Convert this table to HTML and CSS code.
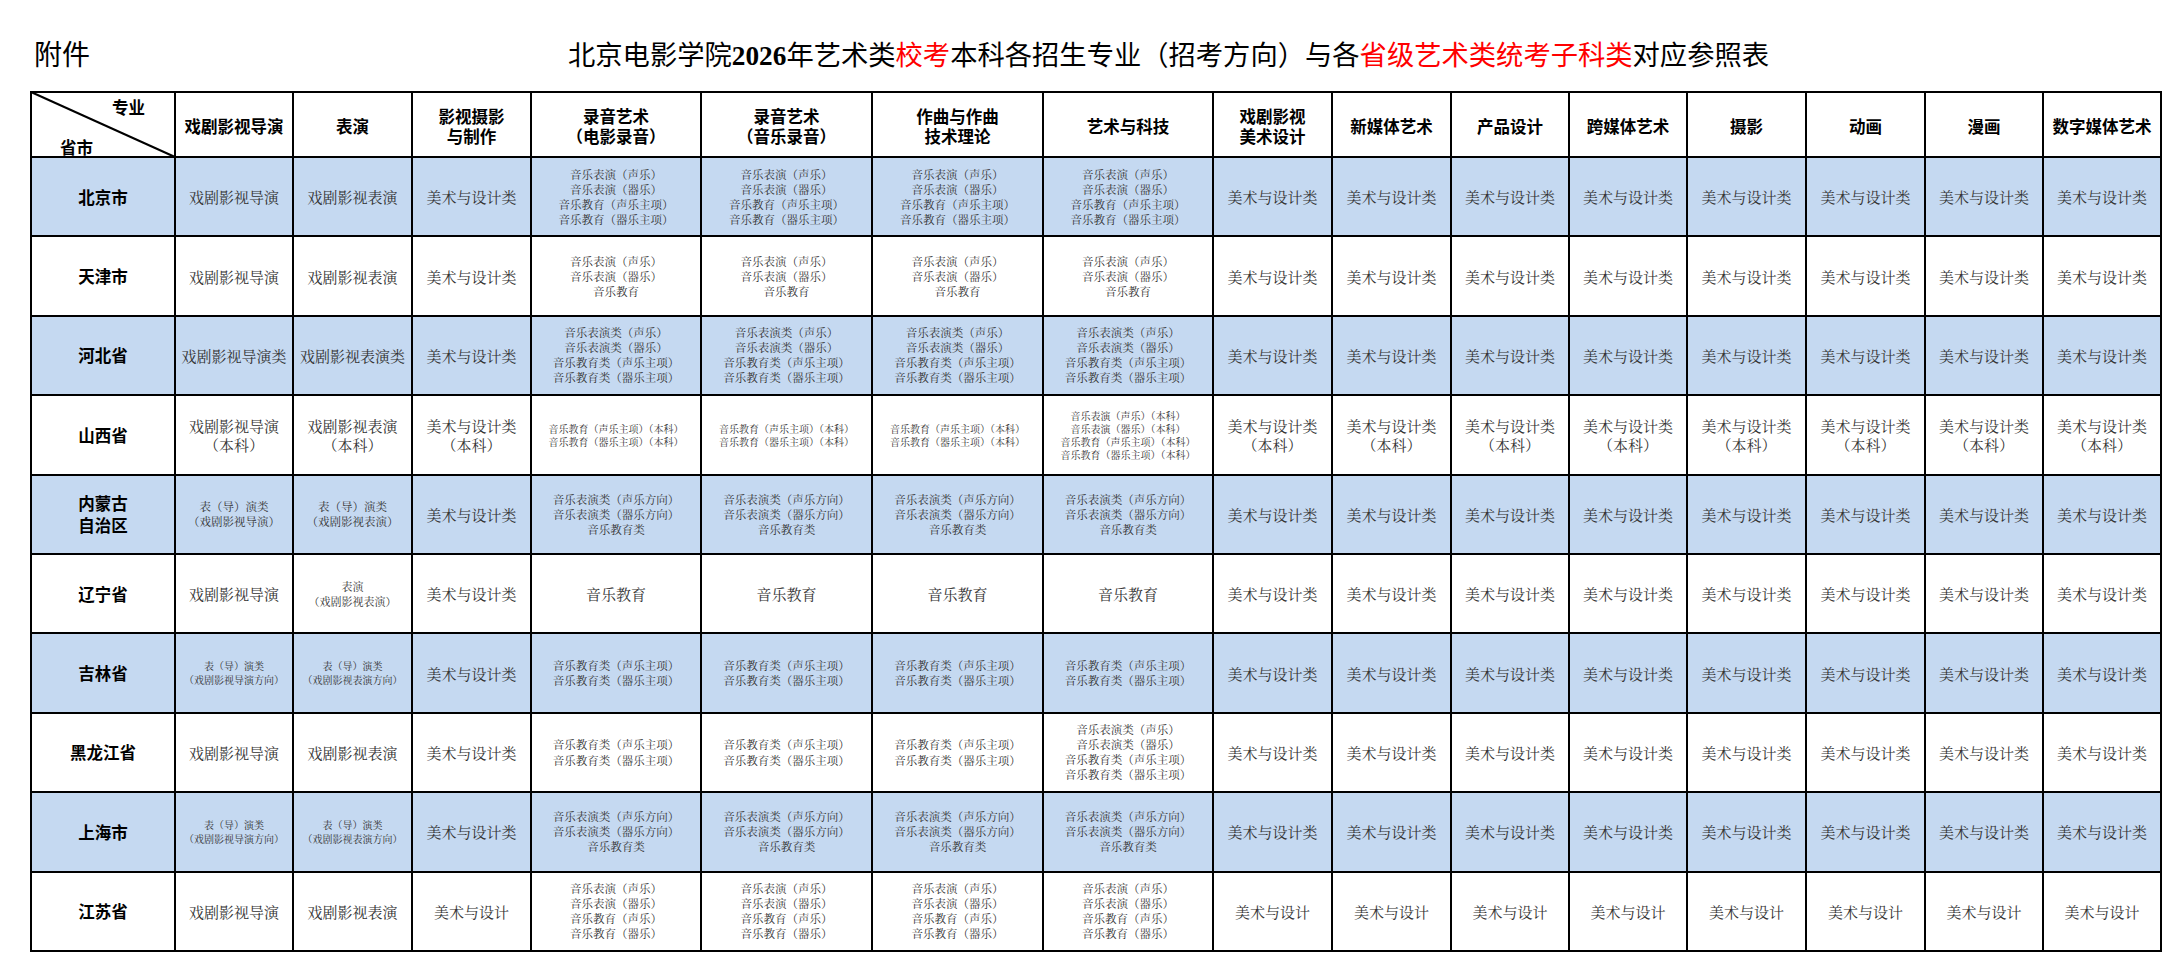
FILE: index.html
```html
<!DOCTYPE html>
<html lang="zh-CN">
<head>
<meta charset="utf-8">
<title>北京电影学院2026年艺术类校考本科各招生专业与各省级艺术类统考子科类对应参照表</title>
<link rel="stylesheet" href="styles.css">
</head>
<body>
<div class="page">
  <div class="top">
    <div class="attach">附件</div>
    <div class="title">北京电影学院<span class="num">2026</span>年艺术类<span class="red">校考</span>本科各招生专业（招考方向）与各<span class="red">省级艺术类统考子科类</span>对应参照表</div>
  </div>

  <div class="sheet">
    <div class="row head">
      <div class="diag">
        <svg class="diag-line" viewBox="0 0 100 100" preserveAspectRatio="none"><line x1="0" y1="0" x2="100" y2="100" stroke="#000" stroke-width="2" vector-effect="non-scaling-stroke"/></svg>
        <span class="lab-top">专业</span>
        <span class="lab-bottom">省市</span>
      </div>
      <div>戏剧影视导演</div>
      <div>表演</div>
      <div>影视摄影<br>与制作</div>
      <div>录音艺术<br>（电影录音）</div>
      <div>录音艺术<br>（音乐录音）</div>
      <div>作曲与作曲<br>技术理论</div>
      <div>艺术与科技</div>
      <div>戏剧影视<br>美术设计</div>
      <div>新媒体艺术</div>
      <div>产品设计</div>
      <div>跨媒体艺术</div>
      <div>摄影</div>
      <div>动画</div>
      <div>漫画</div>
      <div>数字媒体艺术</div>
    </div>

    <div class="row b">
      <div class="pv">北京市</div>
      <div>戏剧影视导演</div>
      <div>戏剧影视表演</div>
      <div>美术与设计类</div>
      <div class="m">音乐表演（声乐）<br>音乐表演（器乐）<br>音乐教育（声乐主项）<br>音乐教育（器乐主项）</div>
      <div class="m">音乐表演（声乐）<br>音乐表演（器乐）<br>音乐教育（声乐主项）<br>音乐教育（器乐主项）</div>
      <div class="m">音乐表演（声乐）<br>音乐表演（器乐）<br>音乐教育（声乐主项）<br>音乐教育（器乐主项）</div>
      <div class="m">音乐表演（声乐）<br>音乐表演（器乐）<br>音乐教育（声乐主项）<br>音乐教育（器乐主项）</div>
      <div>美术与设计类</div>
      <div>美术与设计类</div>
      <div>美术与设计类</div>
      <div>美术与设计类</div>
      <div>美术与设计类</div>
      <div>美术与设计类</div>
      <div>美术与设计类</div>
      <div>美术与设计类</div>
    </div>

    <div class="row">
      <div class="pv">天津市</div>
      <div>戏剧影视导演</div>
      <div>戏剧影视表演</div>
      <div>美术与设计类</div>
      <div class="m">音乐表演（声乐）<br>音乐表演（器乐）<br>音乐教育</div>
      <div class="m">音乐表演（声乐）<br>音乐表演（器乐）<br>音乐教育</div>
      <div class="m">音乐表演（声乐）<br>音乐表演（器乐）<br>音乐教育</div>
      <div class="m">音乐表演（声乐）<br>音乐表演（器乐）<br>音乐教育</div>
      <div>美术与设计类</div>
      <div>美术与设计类</div>
      <div>美术与设计类</div>
      <div>美术与设计类</div>
      <div>美术与设计类</div>
      <div>美术与设计类</div>
      <div>美术与设计类</div>
      <div>美术与设计类</div>
    </div>

    <div class="row b">
      <div class="pv">河北省</div>
      <div>戏剧影视导演类</div>
      <div>戏剧影视表演类</div>
      <div>美术与设计类</div>
      <div class="m">音乐表演类（声乐）<br>音乐表演类（器乐）<br>音乐教育类（声乐主项）<br>音乐教育类（器乐主项）</div>
      <div class="m">音乐表演类（声乐）<br>音乐表演类（器乐）<br>音乐教育类（声乐主项）<br>音乐教育类（器乐主项）</div>
      <div class="m">音乐表演类（声乐）<br>音乐表演类（器乐）<br>音乐教育类（声乐主项）<br>音乐教育类（器乐主项）</div>
      <div class="m">音乐表演类（声乐）<br>音乐表演类（器乐）<br>音乐教育类（声乐主项）<br>音乐教育类（器乐主项）</div>
      <div>美术与设计类</div>
      <div>美术与设计类</div>
      <div>美术与设计类</div>
      <div>美术与设计类</div>
      <div>美术与设计类</div>
      <div>美术与设计类</div>
      <div>美术与设计类</div>
      <div>美术与设计类</div>
    </div>

    <div class="row">
      <div class="pv">山西省</div>
      <div>戏剧影视导演<br>（本科）</div>
      <div>戏剧影视表演<br>（本科）</div>
      <div>美术与设计类<br>（本科）</div>
      <div class="s">音乐教育（声乐主项）（本科）<br>音乐教育（器乐主项）（本科）</div>
      <div class="s">音乐教育（声乐主项）（本科）<br>音乐教育（器乐主项）（本科）</div>
      <div class="s">音乐教育（声乐主项）（本科）<br>音乐教育（器乐主项）（本科）</div>
      <div class="s">音乐表演（声乐）（本科）<br>音乐表演（器乐）（本科）<br>音乐教育（声乐主项）（本科）<br>音乐教育（器乐主项）（本科）</div>
      <div>美术与设计类<br>（本科）</div>
      <div>美术与设计类<br>（本科）</div>
      <div>美术与设计类<br>（本科）</div>
      <div>美术与设计类<br>（本科）</div>
      <div>美术与设计类<br>（本科）</div>
      <div>美术与设计类<br>（本科）</div>
      <div>美术与设计类<br>（本科）</div>
      <div>美术与设计类<br>（本科）</div>
    </div>

    <div class="row b">
      <div class="pv">内蒙古<br>自治区</div>
      <div class="m">表（导）演类<br>（戏剧影视导演）</div>
      <div class="m">表（导）演类<br>（戏剧影视表演）</div>
      <div>美术与设计类</div>
      <div class="m">音乐表演类（声乐方向）<br>音乐表演类（器乐方向）<br>音乐教育类</div>
      <div class="m">音乐表演类（声乐方向）<br>音乐表演类（器乐方向）<br>音乐教育类</div>
      <div class="m">音乐表演类（声乐方向）<br>音乐表演类（器乐方向）<br>音乐教育类</div>
      <div class="m">音乐表演类（声乐方向）<br>音乐表演类（器乐方向）<br>音乐教育类</div>
      <div>美术与设计类</div>
      <div>美术与设计类</div>
      <div>美术与设计类</div>
      <div>美术与设计类</div>
      <div>美术与设计类</div>
      <div>美术与设计类</div>
      <div>美术与设计类</div>
      <div>美术与设计类</div>
    </div>

    <div class="row">
      <div class="pv">辽宁省</div>
      <div>戏剧影视导演</div>
      <div class="n">表演<br>（戏剧影视表演）</div>
      <div>美术与设计类</div>
      <div>音乐教育</div>
      <div>音乐教育</div>
      <div>音乐教育</div>
      <div>音乐教育</div>
      <div>美术与设计类</div>
      <div>美术与设计类</div>
      <div>美术与设计类</div>
      <div>美术与设计类</div>
      <div>美术与设计类</div>
      <div>美术与设计类</div>
      <div>美术与设计类</div>
      <div>美术与设计类</div>
    </div>

    <div class="row b">
      <div class="pv">吉林省</div>
      <div class="d">表（导）演类<br>（戏剧影视导演方向）</div>
      <div class="d">表（导）演类<br>（戏剧影视表演方向）</div>
      <div>美术与设计类</div>
      <div class="m">音乐教育类（声乐主项）<br>音乐教育类（器乐主项）</div>
      <div class="m">音乐教育类（声乐主项）<br>音乐教育类（器乐主项）</div>
      <div class="m">音乐教育类（声乐主项）<br>音乐教育类（器乐主项）</div>
      <div class="m">音乐教育类（声乐主项）<br>音乐教育类（器乐主项）</div>
      <div>美术与设计类</div>
      <div>美术与设计类</div>
      <div>美术与设计类</div>
      <div>美术与设计类</div>
      <div>美术与设计类</div>
      <div>美术与设计类</div>
      <div>美术与设计类</div>
      <div>美术与设计类</div>
    </div>

    <div class="row">
      <div class="pv">黑龙江省</div>
      <div>戏剧影视导演</div>
      <div>戏剧影视表演</div>
      <div>美术与设计类</div>
      <div class="m w">音乐教育类（声乐主项）<br>音乐教育类（器乐主项）</div>
      <div class="m w">音乐教育类（声乐主项）<br>音乐教育类（器乐主项）</div>
      <div class="m w">音乐教育类（声乐主项）<br>音乐教育类（器乐主项）</div>
      <div class="m">音乐表演类（声乐）<br>音乐表演类（器乐）<br>音乐教育类（声乐主项）<br>音乐教育类（器乐主项）</div>
      <div>美术与设计类</div>
      <div>美术与设计类</div>
      <div>美术与设计类</div>
      <div>美术与设计类</div>
      <div>美术与设计类</div>
      <div>美术与设计类</div>
      <div>美术与设计类</div>
      <div>美术与设计类</div>
    </div>

    <div class="row b">
      <div class="pv">上海市</div>
      <div class="d">表（导）演类<br>（戏剧影视导演方向）</div>
      <div class="d">表（导）演类<br>（戏剧影视表演方向）</div>
      <div>美术与设计类</div>
      <div class="m">音乐表演类（声乐方向）<br>音乐表演类（器乐方向）<br>音乐教育类</div>
      <div class="m">音乐表演类（声乐方向）<br>音乐表演类（器乐方向）<br>音乐教育类</div>
      <div class="m">音乐表演类（声乐方向）<br>音乐表演类（器乐方向）<br>音乐教育类</div>
      <div class="m">音乐表演类（声乐方向）<br>音乐表演类（器乐方向）<br>音乐教育类</div>
      <div>美术与设计类</div>
      <div>美术与设计类</div>
      <div>美术与设计类</div>
      <div>美术与设计类</div>
      <div>美术与设计类</div>
      <div>美术与设计类</div>
      <div>美术与设计类</div>
      <div>美术与设计类</div>
    </div>

    <div class="row">
      <div class="pv">江苏省</div>
      <div>戏剧影视导演</div>
      <div>戏剧影视表演</div>
      <div>美术与设计</div>
      <div class="m">音乐表演（声乐）<br>音乐表演（器乐）<br>音乐教育（声乐）<br>音乐教育（器乐）</div>
      <div class="m">音乐表演（声乐）<br>音乐表演（器乐）<br>音乐教育（声乐）<br>音乐教育（器乐）</div>
      <div class="m">音乐表演（声乐）<br>音乐表演（器乐）<br>音乐教育（声乐）<br>音乐教育（器乐）</div>
      <div class="m">音乐表演（声乐）<br>音乐表演（器乐）<br>音乐教育（声乐）<br>音乐教育（器乐）</div>
      <div>美术与设计</div>
      <div>美术与设计</div>
      <div>美术与设计</div>
      <div>美术与设计</div>
      <div>美术与设计</div>
      <div>美术与设计</div>
      <div>美术与设计</div>
      <div>美术与设计</div>
    </div>
  </div>
</div>
</body>
</html>
```

FILE: styles.css
```css
* {
  box-sizing: border-box;
}

html,
body {
  margin: 0;
  padding: 0;
  background: #ffffff;
  overflow: hidden;
}

body {
  font-family: "Noto Sans CJK SC", sans-serif;
  color: #000000;
}

.page {
  width: 2181px;
}

.top {
  height: 91px;
  padding: 39px 0 0 34px;
  display: flex;
  align-items: flex-start;
  font-size: 28px;
  line-height: 28px;
  white-space: nowrap;
}

.attach {
  width: 56px;
}

.title {
  margin-left: 478px;
  font-size: 27.3px;
}

.title .num {
  font-family: "Liberation Serif", serif;
  font-weight: 700;
}

.title .red {
  color: #ff0000;
}

.sheet {
  margin-left: 30px;
  display: grid;
  grid-template-columns: 142px 116px 117px 117px 168px 169px 169px 168px 117px 117px 116px 116px 117px 117px 116px 116px;
  grid-template-rows: 63px repeat(10, 77.4px);
  gap: 2px;
  padding: 2px;
  background: #000000;
  width: max-content;
}

.row {
  display: contents;
}

.row > div {
  background: #ffffff;
  display: flex;
  flex-direction: column;
  align-items: center;
  justify-content: center;
  text-align: center;
  white-space: nowrap;
  font-family: "Noto Serif CJK SC", "Noto Sans CJK SC", serif;
  font-size: 15px;
  line-height: 19px;
  color: #333333;
}

.row.b > div {
  background: #c5d9f1;
}

.row.head > div {
  font-family: "Noto Sans CJK SC", sans-serif;
  font-weight: 700;
  font-size: 16.5px;
  line-height: 20px;
  color: #000000;
  padding-top: 3px;
}

.row > .pv {
  font-family: "Noto Sans CJK SC", sans-serif;
  font-weight: 700;
  font-size: 16.5px;
  line-height: 22px;
  color: #000000;
}

.row > .m {
  font-size: 11.5px;
  line-height: 15px;
}

.row > .m.w {
  line-height: 16px;
}

.row > .s {
  font-size: 10px;
  line-height: 13px;
}

.row > .d {
  font-size: 10px;
  line-height: 14px;
}

.row > .n {
  font-size: 11px;
  line-height: 15px;
}

.row.head > .diag {
  position: relative;
  justify-content: space-between;
  align-items: stretch;
  padding: 4px 0 0 0;
}

.diag-line {
  position: absolute;
  left: -1px;
  top: -1px;
  width: calc(100% + 2px);
  height: calc(100% + 2px);
  overflow: visible;
}

.lab-top {
  align-self: flex-end;
  margin-right: 29px;
  line-height: 20px;
}

.lab-bottom {
  align-self: flex-start;
  margin-left: 28px;
  line-height: 18px;
}
```
